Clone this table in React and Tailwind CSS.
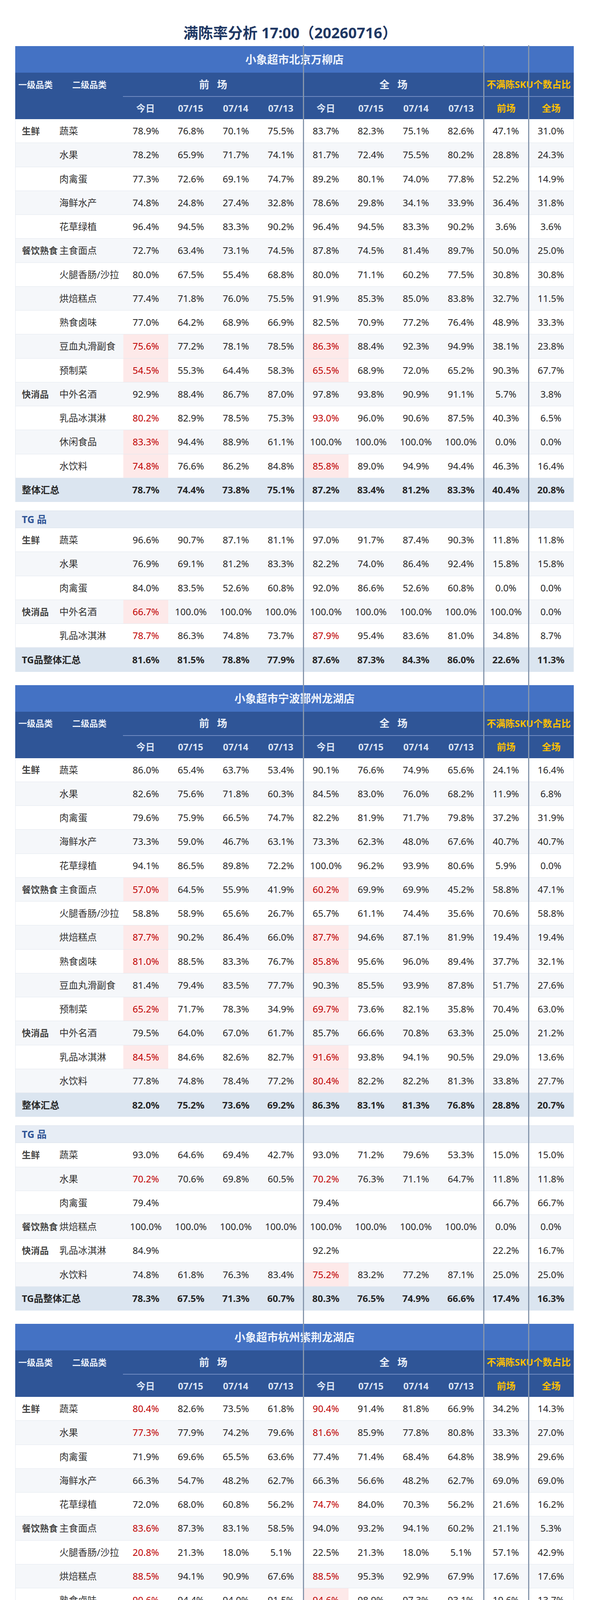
import React from "react";

const GRID = "grid grid-cols-[104px_172px_repeat(10,minmax(0,1fr))]";

const STORES = [
  {
    name: "小象超市北京万柳店",
    rows: [
      ["生鲜", "蔬菜", "78.9 76.8 70.1 75.5 83.7 82.3 75.1 82.6 47.1 31.0"],
      ["", "水果", "78.2 65.9 71.7 74.1 81.7 72.4 75.5 80.2 28.8 24.3"],
      ["", "肉禽蛋", "77.3 72.6 69.1 74.7 89.2 80.1 74.0 77.8 52.2 14.9"],
      ["", "海鲜水产", "74.8 24.8 27.4 32.8 78.6 29.8 34.1 33.9 36.4 31.8"],
      ["", "花草绿植", "96.4 94.5 83.3 90.2 96.4 94.5 83.3 90.2 3.6 3.6"],
      ["餐饮熟食", "主食面点", "72.7 63.4 73.1 74.5 87.8 74.5 81.4 89.7 50.0 25.0"],
      ["", "火腿香肠/沙拉", "80.0 67.5 55.4 68.8 80.0 71.1 60.2 77.5 30.8 30.8"],
      ["", "烘焙糕点", "77.4 71.8 76.0 75.5 91.9 85.3 85.0 83.8 32.7 11.5"],
      ["", "熟食卤味", "77.0 64.2 68.9 66.9 82.5 70.9 77.2 76.4 48.9 33.3"],
      ["", "豆血丸滑副食", "75.6p 77.2 78.1 78.5 86.3p 88.4 92.3 94.9 38.1 23.8"],
      ["", "预制菜", "54.5p 55.3 64.4 58.3 65.5p 68.9 72.0 65.2 90.3 67.7"],
      ["快消品", "中外名酒", "92.9 88.4 86.7 87.0 97.8 93.8 90.9 91.1 5.7 3.8"],
      ["", "乳品冰淇淋", "80.2r 82.9 78.5 75.3 93.0r 96.0 90.6 87.5 40.3 6.5"],
      ["", "休闲食品", "83.3p 94.4 88.9 61.1 100.0 100.0 100.0 100.0 0.0 0.0"],
      ["", "水饮料", "74.8p 76.6 86.2 84.8 85.8p 89.0 94.9 94.4 46.3 16.4"],
    ],
    summary: "78.7 74.4 73.8 75.1 87.2 83.4 81.2 83.3 40.4 20.8",
    tg: [
      ["生鲜", "蔬菜", "96.6 90.7 87.1 81.1 97.0 91.7 87.4 90.3 11.8 11.8"],
      ["", "水果", "76.9 69.1 81.2 83.3 82.2 74.0 86.4 92.4 15.8 15.8"],
      ["", "肉禽蛋", "84.0 83.5 52.6 60.8 92.0 86.6 52.6 60.8 0.0 0.0"],
      ["快消品", "中外名酒", "66.7p 100.0 100.0 100.0 100.0 100.0 100.0 100.0 100.0 0.0"],
      ["", "乳品冰淇淋", "78.7r 86.3 74.8 73.7 87.9r 95.4 83.6 81.0 34.8 8.7"],
    ],
    tgSummary: "81.6 81.5 78.8 77.9 87.6 87.3 84.3 86.0 22.6 11.3",
  },
  {
    name: "小象超市宁波鄞州龙湖店",
    rows: [
      ["生鲜", "蔬菜", "86.0 65.4 63.7 53.4 90.1 76.6 74.9 65.6 24.1 16.4"],
      ["", "水果", "82.6 75.6 71.8 60.3 84.5 83.0 76.0 68.2 11.9 6.8"],
      ["", "肉禽蛋", "79.6 75.9 66.5 74.7 82.2 81.9 71.7 79.8 37.2 31.9"],
      ["", "海鲜水产", "73.3 59.0 46.7 63.1 73.3 62.3 48.0 67.6 40.7 40.7"],
      ["", "花草绿植", "94.1 86.5 89.8 72.2 100.0 96.2 93.9 80.6 5.9 0.0"],
      ["餐饮熟食", "主食面点", "57.0p 64.5 55.9 41.9 60.2p 69.9 69.9 45.2 58.8 47.1"],
      ["", "火腿香肠/沙拉", "58.8 58.9 65.6 26.7 65.7 61.1 74.4 35.6 70.6 58.8"],
      ["", "烘焙糕点", "87.7p 90.2 86.4 66.0 87.7p 94.6 87.1 81.9 19.4 19.4"],
      ["", "熟食卤味", "81.0p 88.5 83.3 76.7 85.8p 95.6 96.0 89.4 37.7 32.1"],
      ["", "豆血丸滑副食", "81.4 79.4 83.5 77.7 90.3 85.5 93.9 87.8 51.7 27.6"],
      ["", "预制菜", "65.2p 71.7 78.3 34.9 69.7p 73.6 82.1 35.8 70.4 63.0"],
      ["快消品", "中外名酒", "79.5 64.0 67.0 61.7 85.7 66.6 70.8 63.3 25.0 21.2"],
      ["", "乳品冰淇淋", "84.5p 84.6 82.6 82.7 91.6p 93.8 94.1 90.5 29.0 13.6"],
      ["", "水饮料", "77.8 74.8 78.4 77.2 80.4p 82.2 82.2 81.3 33.8 27.7"],
    ],
    summary: "82.0 75.2 73.6 69.2 86.3 83.1 81.3 76.8 28.8 20.7",
    tg: [
      ["生鲜", "蔬菜", "93.0 64.6 69.4 42.7 93.0 71.2 79.6 53.3 15.0 15.0"],
      ["", "水果", "70.2r 70.6 69.8 60.5 70.2r 76.3 71.1 64.7 11.8 11.8"],
      ["", "肉禽蛋", "79.4 - - - 79.4 - - - 66.7 66.7"],
      ["餐饮熟食", "烘焙糕点", "100.0 100.0 100.0 100.0 100.0 100.0 100.0 100.0 0.0 0.0"],
      ["快消品", "乳品冰淇淋", "84.9 - - - 92.2 - - - 22.2 16.7"],
      ["", "水饮料", "74.8 61.8 76.3 83.4 75.2p 83.2 77.2 87.1 25.0 25.0"],
    ],
    tgSummary: "78.3 67.5 71.3 60.7 80.3 76.5 74.9 66.6 17.4 16.3",
  },
  {
    name: "小象超市杭州紫荆龙湖店",
    rows: [
      ["生鲜", "蔬菜", "80.4r 82.6 73.5 61.8 90.4r 91.4 81.8 66.9 34.2 14.3"],
      ["", "水果", "77.3r 77.9 74.2 79.6 81.6r 85.9 77.8 80.8 33.3 27.0"],
      ["", "肉禽蛋", "71.9 69.6 65.5 63.6 77.4 71.4 68.4 64.8 38.9 29.6"],
      ["", "海鲜水产", "66.3 54.7 48.2 62.7 66.3 56.6 48.2 62.7 69.0 69.0"],
      ["", "花草绿植", "72.0 68.0 60.8 56.2 74.7r 84.0 70.3 56.2 21.6 16.2"],
      ["餐饮熟食", "主食面点", "83.6r 87.3 83.1 58.5 94.0 93.2 94.1 60.2 21.1 5.3"],
      ["", "火腿香肠/沙拉", "20.8r 21.3 18.0 5.1 22.5 21.3 18.0 5.1 57.1 42.9"],
      ["", "烘焙糕点", "88.5r 94.1 90.9 67.6 88.5r 95.3 92.9 67.9 17.6 17.6"],
      ["", "熟食卤味", "90.6r 94.4 94.0 91.5 94.6p 98.9 97.3 93.1 19.6 13.7"],
      ["", "豆血丸滑副食", "89.8r 92.8 97.9 71.8 92.2r 99.7 99.1 73.3 17.2 13.8"],
      ["", "预制菜", "57.3p 86.0 82.0 33.7 60.1p 87.6 82.0 34.3 51.6 48.4"],
      ["快消品", "中外名酒", "90.4r 91.6 92.5 87.3 91.1r 95.1 96.4 89.5 47.9 47.9"],
      ["", "乳品冰淇淋", "91.3 86.0 88.6 74.6 92.9 90.9 92.1 76.7 12.4 11.2"],
      ["", "水饮料", "93.9 91.0 92.0 78.0 95.0 94.5 94.3 79.8 14.8 13.1"],
    ],
    summary: "84.1 82.8 81.0 72.2 88.0r 88.4 85.0 74.4 29.5 21.2",
    tg: [
      ["生鲜", "蔬菜", "89.0 82.8 68.9 50.8 97.3 91.5 80.3 58.0 15.8 0.0"],
      ["", "水果", "80.7 79.7 80.1 86.8 84.6r 88.5 83.9 88.3 36.8 31.6"],
      ["餐饮熟食", "熟食卤味", "100.0 97.3 96.6 98.6 100.0 100.0 100.0 100.0 0.0 0.0"],
      ["", "预制菜", "30.0p 100.0 100.0 71.4 30.0p 100.0 100.0 71.4 100.0 100.0"],
      ["快消品", "乳品冰淇淋", "94.4 87.4 91.8 71.6 95.9 89.6 93.4 73.3 0.0 0.0"],
      ["", "水饮料", "90.9 89.1 93.6 65.6 92.0r 98.9 100.0 71.6 33.3 33.3"],
    ],
    tgSummary: "88.0 81.7 80.9 70.9 91.3 87.8 85.3 73.7 21.2 15.2",
  },
];

function parse(v) {
  if (v === "-") return { text: "", flag: "" };
  const last = v[v.length - 1];
  if (last === "p" || last === "r") return { text: v.slice(0, -1) + "%", flag: last };
  return { text: v + "%", flag: "" };
}

function ValueCell({ v, bold }) {
  const { text, flag } = parse(v);
  const cls =
    flag === "p"
      ? "bg-[#fde9e9] text-[#c00000]"
      : flag === "r"
      ? "text-[#c00000]"
      : "text-[#262626]";
  return (
    <div className={`flex items-center justify-center whitespace-nowrap ${bold ? "font-bold" : ""} ${cls}`}>
      {text}
    </div>
  );
}

function DataRow({ cat, sub, vals, idx }) {
  return (
    <div
      className={`${GRID} h-[61.25px] border-b border-x border-[#e3e8ef] ${
        idx % 2 === 1 ? "bg-[#f5f7fa]" : "bg-white"
      }`}
    >
      <div className="flex items-center pl-[16px] font-bold text-[#444] whitespace-nowrap text-[23px]">{cat}</div>
      <div className="flex items-center pl-[8px] text-[#333] whitespace-nowrap">{sub}</div>
      {vals.split(" ").map((v, i) => (
        <ValueCell key={i} v={v} />
      ))}
    </div>
  );
}

function SummaryRow({ label, vals }) {
  return (
    <div className={`${GRID} h-[61.25px] border-x border-[#e3e8ef] bg-[#dbe5f0]`}>
      <div className="col-span-2 flex items-center pl-[16px] font-bold text-[#262626] whitespace-nowrap">{label}</div>
      {vals.split(" ").map((v, i) => (
        <ValueCell key={i} v={v} bold />
      ))}
    </div>
  );
}

function StoreTable({ store }) {
  const dates = ["今日", "07/15", "07/14", "07/13", "今日", "07/15", "07/14", "07/13"];
  return (
    <div className="flex flex-col">
      <div className="h-[68px] bg-[#4472c4] flex items-center justify-center text-[28px] font-bold text-[#eef3fb]">
        {store.name}
      </div>
      <div className={`${GRID} h-[60px] bg-[#2f5597] font-bold text-[#e8eef7]`}>
        <div className="flex items-center justify-center text-[22px] whitespace-nowrap">一级品类</div>
        <div className="flex items-center justify-center text-[22px] whitespace-nowrap">二级品类</div>
        <div className="col-span-4 flex items-center justify-center gap-[20px] text-[26px]">
          <span>前</span>
          <span>场</span>
        </div>
        <div className="col-span-4 flex items-center justify-center gap-[20px] text-[26px]">
          <span>全</span>
          <span>场</span>
        </div>
        <div className="col-span-2 flex items-center justify-center text-[24px] text-[#ffc000] whitespace-nowrap">
          不满陈SKU个数占比
        </div>
      </div>
      <div className={`${GRID} h-[59px] bg-[#2f5597] font-bold text-[#dbe4f3] text-[24px]`}>
        <div />
        <div />
        {dates.map((d, i) => (
          <div key={i} className="flex items-center justify-center border-t-2 border-[#6f8bc2] whitespace-nowrap">
            {d}
          </div>
        ))}
        <div className="flex items-center justify-center border-t-2 border-[#6f8bc2] text-[#ffc000]">前场</div>
        <div className="flex items-center justify-center border-t-2 border-[#6f8bc2] text-[#ffc000]">全场</div>
      </div>
      {store.rows.map((r, i) => (
        <DataRow key={i} cat={r[0]} sub={r[1]} vals={r[2]} idx={i} />
      ))}
      <SummaryRow label="整体汇总" vals={store.summary} />
      <div className="h-[22px]" />
      <div className="h-[45px] bg-[#e7edf5] border-y border-x border-[#d9e1eb] flex items-center pl-[16px] text-[25px] font-bold text-[#2f5597]">
        TG 品
      </div>
      {store.tg.map((r, i) => (
        <DataRow key={i} cat={r[0]} sub={r[1]} vals={r[2]} idx={i} />
      ))}
      <SummaryRow label="TG品整体汇总" vals={store.tgSummary} />
    </div>
  );
}

export default function App() {
  return (
    <div className="min-h-[5176px] bg-white font-['Noto_Sans','Noto_Sans_CJK_SC',sans-serif] text-[24px]">
      <div className="pt-[64px] pb-[16px] flex justify-center">
        <h1 className="h-[38px] leading-[38px] text-[38px] font-bold text-[#1f3864] whitespace-nowrap pr-[22px]">
          满陈率分析 17:00（20260716）
        </h1>
      </div>
      <div className="relative w-[1431px] mx-auto flex flex-col gap-[34px]">
        {STORES.map((s, i) => (
          <StoreTable key={i} store={s} />
        ))}
        <div className="absolute top-[-2px] bottom-0 left-[737px] w-[3px] bg-[#8797ad]" />
        <div className="absolute top-[-2px] bottom-0 left-[1199px] w-[3px] bg-[#8797ad]" />
        <div className="absolute top-[-2px] bottom-0 left-[1314px] w-[3px] bg-[#8797ad]" />
      </div>
    </div>
  );
}
